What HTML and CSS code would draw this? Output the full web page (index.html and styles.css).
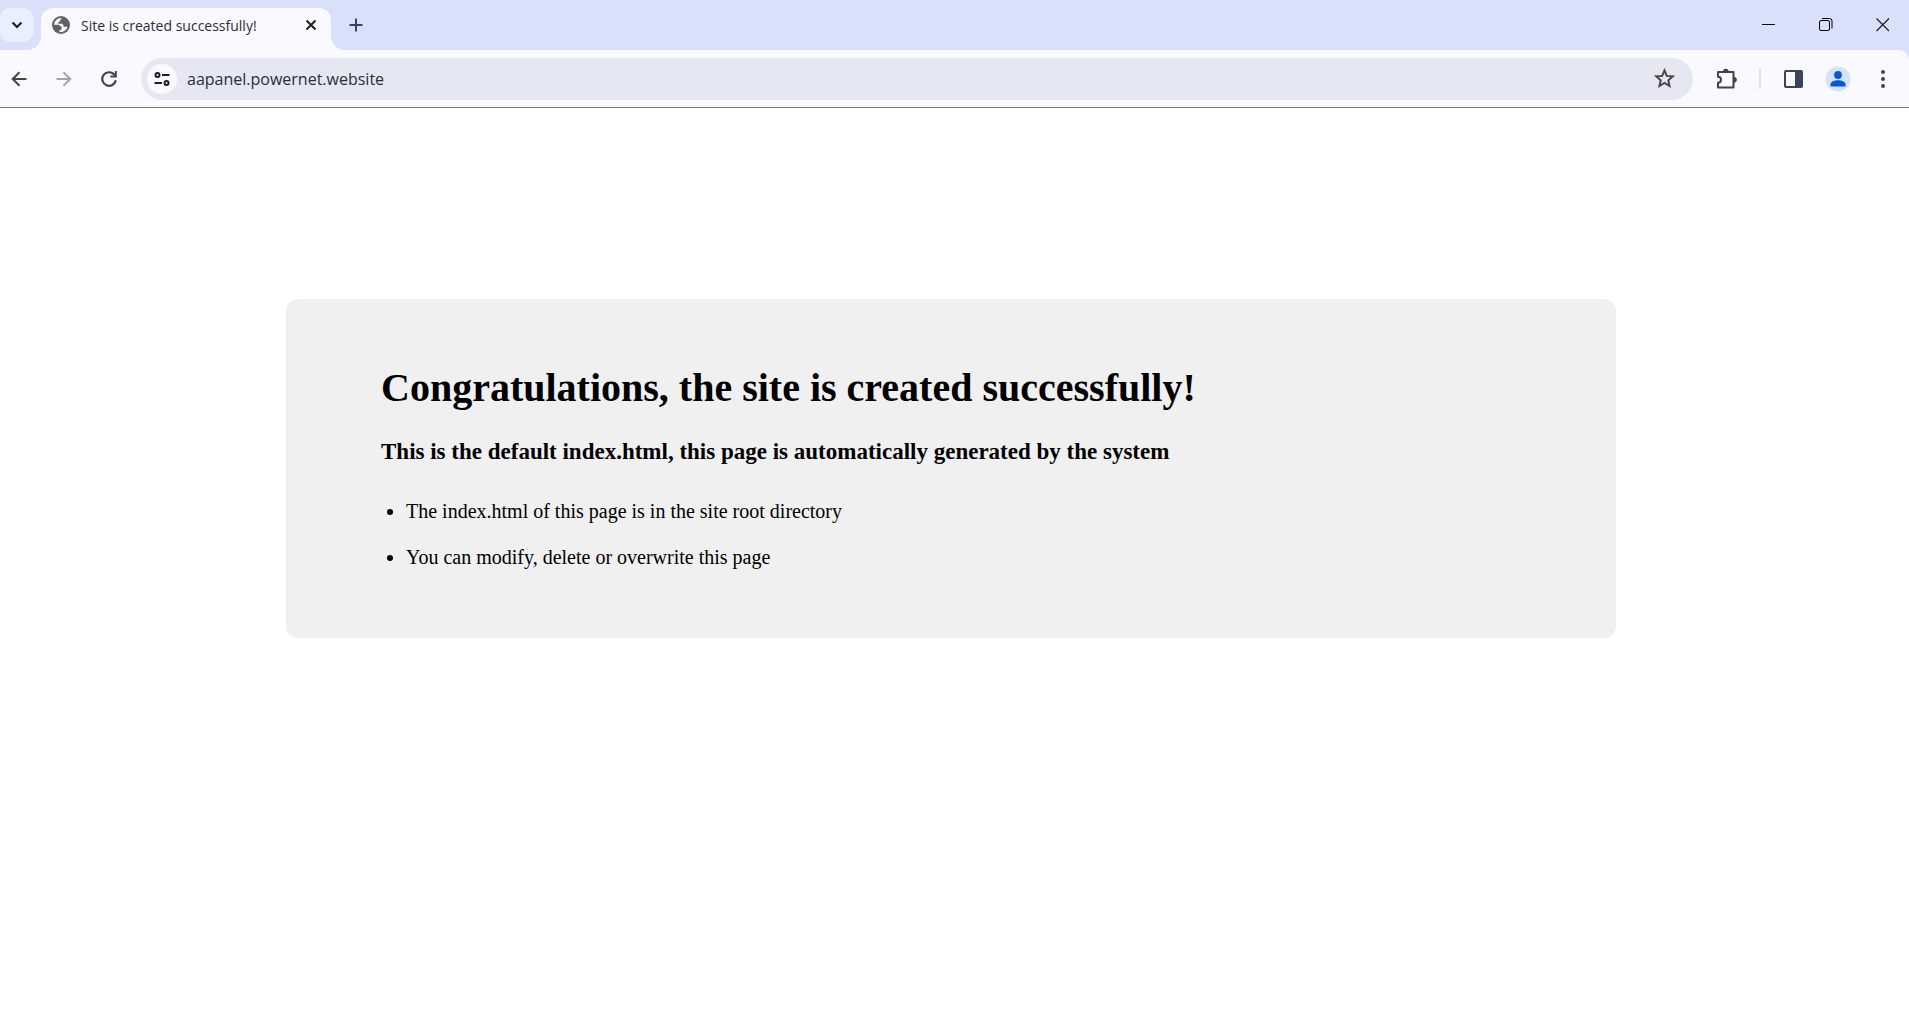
FILE: index.html
```
<!DOCTYPE html>
<html lang="en">
<head>
  <meta charset="UTF-8" />
  <meta name="viewport" content="width=device-width, initial-scale=1.0"/>
  <title>Site is created successfully!</title>
  <link rel="stylesheet" href="styles.css">
</head>
<body>
  <header class="browser">
    <div class="tab-strip">
      <button class="tab-search" aria-label="Search tabs">
        <svg width="12" height="8" viewBox="0 0 12 8"><path d="M1.500 1.500 6 6l4.500-4.500" fill="none" stroke="#1c1e26" stroke-width="2.200"/></svg>
      </button>
      <div class="tab">
        <svg width="18" height="18" viewBox="0 0 18 18">
          <circle cx="9" cy="9" r="9" fill="#5f6368"/>
          <path d="M2 8.800A7 7 0 0 1 10 2.100L8.500 3.300v1.500L6.300 6.200v1.500h3.900l1.300 1.500v1.600h2.200l1.900.3A7 7 0 0 1 7.300 15.800v-1.500h1.900v-1.700l1.100-1.100-1.800-1.200-1.600-1.500Z" fill="#faf9ff"/>
        </svg>
        <span class="tab-title">Site is created successfully!</span>
        <button class="tab-close" aria-label="Close tab">
          <svg width="12" height="12" viewBox="0 0 12 12"><path d="m1.500 1.500 9 9m0-9-9 9" fill="none" stroke="#1c1e26" stroke-width="2"/></svg>
        </button>
      </div>
      <button class="new-tab" aria-label="New tab">
        <svg width="14" height="14" viewBox="0 0 14 14"><path d="M7 .5v13M.5 7h13" fill="none" stroke="#3c4457" stroke-width="2"/></svg>
      </button>
      <div class="window-controls">
        <button aria-label="Minimize">
          <svg width="14" height="14" viewBox="0 0 14 14"><path d="M0 6.500h13" stroke="#000"/></svg>
        </button>
        <button aria-label="Restore">
          <svg width="14" height="14" viewBox="0 0 14 14" fill="none" stroke="#000"><rect x=".5" y="2.500" width="10" height="10" rx="1.500"/><path d="M3 .5h7.500a2.500 2.500 0 0 1 2.500 2.500v7.500"/></svg>
        </button>
        <button aria-label="Close">
          <svg width="14" height="14" viewBox="0 0 14 14"><path d="m.5.5 12.500 12.500m0-12.500L.5 13" fill="none" stroke="#1c1e26" stroke-width="1.200"/></svg>
        </button>
      </div>
    </div>
    <div class="toolbar">
      <button class="tool" aria-label="Back">
        <svg width="16" height="16" viewBox="0 0 16 16"><path d="M15.500 8H2m6.500-6.800L1.700 8l6.800 6.800" fill="none" stroke="#3c4457" stroke-width="2"/></svg>
      </button>
      <button class="tool" aria-label="Forward">
        <svg width="16" height="16" viewBox="0 0 16 16"><path d="M.5 8H14M7.500 1.200 14.300 8l-6.800 6.800" fill="none" stroke="#a3a3a8" stroke-width="2"/></svg>
      </button>
      <button class="tool" aria-label="Reload">
        <svg width="16" height="16" viewBox="0 0 16 16"><path d="M14.800 9.300A6.800 6.800 0 1 1 13 3.300l1.800 1.900" fill="none" stroke="#3c4457" stroke-width="2.200"/><path d="M15.800 0v6.500H9.300v-2h4.500V0Z" fill="#3c4457"/></svg>
      </button>
      <div class="omnibox">
        <button class="site-info" aria-label="View site information">
          <svg width="16" height="14" viewBox="0 0 16 14" fill="none" stroke="#1c1e26" stroke-width="2"><circle cx="3.500" cy="3" r="2"/><path d="M8 3h7.500M.5 11H8"/><circle cx="12.500" cy="11" r="2"/></svg>
        </button>
        <input class="url" type="text" value="aapanel.powernet.website" aria-label="Address">
        <button class="tool" aria-label="Bookmark this tab">
          <svg width="21" height="21" viewBox="0 0 20 20"><path d="m10 2.300 2.200 5.200 5.600.5-4.200 3.700 1.200 5.500L10 14.300l-4.800 2.900 1.200-5.500L2.200 8l5.600-.5Z" fill="none" stroke="#474747" stroke-width="1.900"/></svg>
        </button>
      </div>
      <button class="tool" aria-label="Extensions">
        <svg width="22" height="22" viewBox="0 0 22 22"><path d="M2 4h15.500v15.500H2v-4.700a3 3 0 0 0 0-6Z" fill="none" stroke="#3c4457" stroke-width="2" stroke-linejoin="round"/><path d="M7 3.500a2.800 2.800 0 0 1 5.600 0ZM18 9a2.800 2.800 0 0 1 0 5.600Z" fill="#3c4457"/></svg>
      </button>
      <span class="divider"></span>
      <div class="profile-tools">
        <button class="tool" aria-label="Side panel">
          <svg width="19" height="18" viewBox="0 0 19 18"><rect x="1" y="1" width="17" height="16" rx="1" fill="none" stroke="#3c4457" stroke-width="2"/><path d="M11 1h7v16h-7Z" fill="#3c4457"/></svg>
        </button>
        <button class="tool" aria-label="Profile">
          <svg width="26" height="26" viewBox="0 0 26 26"><circle cx="13" cy="13" r="12.500" fill="#d3e3fd"/><circle cx="13" cy="9" r="3.900" fill="#0b57d0"/><path d="M5.500 20.500v-2.200c0-2.800 4.500-4.100 7.500-4.100s7.500 1.300 7.500 4.100v2.200Z" fill="#0b57d0"/></svg>
        </button>
        <button class="tool" aria-label="Menu">
          <svg width="4" height="18" viewBox="0 0 4 18" fill="#3c4457"><circle cx="2" cy="2" r="2"/><circle cx="2" cy="9" r="2"/><circle cx="2" cy="16" r="2"/></svg>
        </button>
      </div>
    </div>
  </header>
  <main>
    <div class="container">
      <h1>Congratulations, the site is created successfully!</h1>
      <h3>This is the default index.html, this page is automatically generated by the system</h3>
      <ul>
        <li>The index.html of this page is in the site root directory</li>
        <li>You can modify, delete or overwrite this page</li>
      </ul>
    </div>
  </main>
</body>
</html>
```

FILE: styles.css
```
* { box-sizing: border-box; }
body { margin: 0; background: #fff; font-family: "Liberation Serif", "Times New Roman", serif; font-size: 20px; color: #000; }
svg { display: block; flex: none; }
button { display: flex; align-items: center; justify-content: center; flex: none; padding: 0; border: none; background: none; cursor: pointer; }

.browser { background: #d9e1fa; border-bottom: 1px solid #77777d; font-family: "Open Sans", sans-serif; }
.tab-strip { display: flex; height: 50px; padding-top: 8px; }
.tab-search { width: 34px; height: 34px; background: #e9effd; border-radius: 10px 12px 12px 10px; }
.tab { position: relative; display: flex; align-items: center; width: 290px; height: 42px; margin-left: 7px; padding: 0 10px 8px 11px; background: #faf9ff; border-radius: 12px 12px 0 0; }
.tab::before, .tab::after { content: ""; position: absolute; bottom: 0; width: 14px; height: 14px; }
.tab::before { right: 100%; background: radial-gradient(circle at 0 0, transparent 14px, #faf9ff 14px); }
.tab::after { left: 100%; background: radial-gradient(circle at 100% 0, transparent 14px, #faf9ff 14px); }
.tab-title { flex: 1; margin-left: 11px; font-size: 14px; color: #2c2e36; white-space: nowrap; }
.tab-close { width: 20px; height: 20px; }
.new-tab { width: 34px; height: 34px; margin-left: 8px; }
.window-controls { display: flex; gap: 25px; margin-left: auto; padding-right: 10px; }
.window-controls button { width: 32px; height: 34px; }

.toolbar { display: flex; align-items: center; gap: 15px; height: 57px; padding: 0 11px 0 4px; background: #faf9ff; border-top-right-radius: 10px; }
.tool { width: 30px; height: 30px; }
.omnibox { display: flex; flex: 1; align-items: center; height: 42px; margin: 0 4px 0 2px; padding: 0 14px 0 6px; background: #e5e8f2; border-radius: 21px; }
.site-info { width: 30px; height: 30px; background: #faf9ff; border-radius: 50%; }
.url { flex: 1; min-width: 0; padding: 0 10px; border: none; outline: none; background: none; font-family: inherit; font-size: 16px; color: #2c2e36; }
.divider { width: 2px; height: 20px; margin: 0 2px; background: #d3e3fd; }
.profile-tools { display: flex; gap: 15px; }

main { display: flow-root; padding: 1px 8px 0 1px; }
.container { display: flow-root; width: 70%; margin: 10% auto 0; padding: 2% 5%; background: #f0f0f0; border-radius: 12px; }
h1 { margin: 27px 0 28px; font-size: 40px; }
h3 { margin: 0 0 23px; font-size: 23px; }
ul { margin: 0 0 20px; padding-left: 25px; }
ul li { line-height: 46px; }
```
